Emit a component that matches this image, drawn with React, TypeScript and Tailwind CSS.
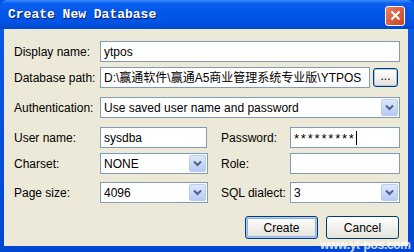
import React from "react";

const Chevron = () => (
  <svg width="9" height="7" viewBox="0 0 9 7">
    <path d="M1 1.5 L4.5 5 L8 1.5" fill="none" stroke="#4D6185" strokeWidth="2" />
  </svg>
);

function Input({ w, children }: { w: string; children?: React.ReactNode }) {
  return (
    <div className={`${w} h-[21px] border border-[#7F9DB9] bg-white flex items-center pl-[3px] overflow-hidden whitespace-nowrap text-[12px] text-black`}>
      {children}
    </div>
  );
}

function Select({ w, value }: { w: string; value: string }) {
  return (
    <div className={`${w} h-[21px] border border-[#7F9DB9] bg-white flex items-center pl-[3px] text-[12px] text-black`}>
      <span className="flex-1 whitespace-nowrap overflow-hidden">{value}</span>
      <div className="w-[17px] h-[17px] mr-[1px] rounded-[2px] border border-[#B9CBF3] bg-gradient-to-b from-[#DDE8FE] to-[#B7CAF5] flex items-center justify-center">
        <Chevron />
      </div>
    </div>
  );
}

const Label = ({ w, children }: { w: string; children: React.ReactNode }) => (
  <div className={`${w} text-[12px] text-black whitespace-nowrap`}>{children}</div>
);

export default function App() {
  return (
    <div className="w-[414px] h-[252px] relative font-['Liberation_Sans',sans-serif] overflow-hidden bg-[#0050DD]">
      <div className="flex flex-col h-full rounded-t-[7px] bg-gradient-to-b from-[#0A5BE8] to-[#0046D4]">
        {/* Title bar */}
        <div className="h-[29px] flex items-center justify-between pl-[8px] pr-[9px] rounded-t-[7px] bg-[linear-gradient(to_bottom,#3D8DFF_0%,#0A5EF0_12%,#0056E8_50%,#0052E2_80%,#0046CE_100%)]">
          <span className="font-['Liberation_Mono',monospace] font-bold text-[13px] text-white [text-shadow:1px_1px_0_#0A1E6E]">
            Create New Database
          </span>
          <div className="w-[20px] h-[20px] mt-[2px] rounded-[3px] border border-white bg-gradient-to-br from-[#E98063] to-[#C8401E] flex items-center justify-center">
            <svg width="11" height="11" viewBox="0 0 11 11">
              <path d="M1.5 1.5 L9.5 9.5 M9.5 1.5 L1.5 9.5" stroke="white" strokeWidth="2" />
            </svg>
          </div>
        </div>
        {/* Client area */}
        <div className="flex-1 ml-[4px] mr-[6px] mb-[6px] bg-[#ECE9D8] pl-[10px] pr-[8px] flex flex-col">
          <div className="flex items-center mt-[12px]">
            <Label w="w-[86px]">Display name:</Label>
            <Input w="w-[300px]">ytpos</Input>
          </div>
          <div className="flex items-center mt-[5px]">
            <Label w="w-[86px]">Database path:</Label>
            <Input w="w-[270px]">
              <span className="font-['Liberation_Sans','Noto_Sans_CJK_SC',sans-serif] text-[12px]">
                D:\赢通软件\赢通A5商业管理系统专业版\YTPOS
              </span>
            </Input>
            <div className="ml-[3px] w-[25px] h-[19px] rounded-[3px] border border-[#003C74] bg-gradient-to-b from-white to-[#E6E3D6] shadow-[inset_0_0_0_1px_#A9C4EE] flex items-end justify-center pb-[4px] text-[12px] leading-none">
              ...
            </div>
          </div>
          <div className="flex items-center mt-[9px]">
            <Label w="w-[86px]">Authentication:</Label>
            <Select w="w-[300px]" value="Use saved user name and password" />
          </div>
          <div className="flex items-center mt-[9px]">
            <Label w="w-[86px]">User name:</Label>
            <Input w="w-[107px]">sysdba</Input>
            <Label w="w-[83px] pl-[14px]">Password:</Label>
            <Input w="w-[110px]">
              <span className="text-[13px] tracking-[1.8px] mt-[3px]">*********</span>
              <span className="w-[1px] h-[14px] bg-black" />
            </Input>
          </div>
          <div className="flex items-center mt-[5px]">
            <Label w="w-[86px]">Charset:</Label>
            <Select w="w-[108px]" value="NONE" />
            <Label w="w-[82px] pl-[13px]">Role:</Label>
            <Input w="w-[110px]" />
          </div>
          <div className="flex items-center mt-[8px]">
            <Label w="w-[86px]">Page size:</Label>
            <Select w="w-[108px]" value="4096" />
            <Label w="w-[82px] pl-[13px]">SQL dialect:</Label>
            <Select w="w-[110px]" value="3" />
          </div>
          <div className="flex justify-end mt-[13px] pr-[1px] gap-[8px]">
            <div className="w-[73px] h-[23px] rounded-[3px] border border-[#003C74] bg-gradient-to-b from-white to-[#E3E2DA] shadow-[inset_0_0_0_1px_#B4CBF1,inset_0_0_0_2px_#8FB0EA] flex items-center justify-center text-[12px] text-black">
              Create
            </div>
            <div className="w-[73px] h-[23px] rounded-[3px] border border-[#003C74] bg-gradient-to-b from-white to-[#E3E2DA] flex items-center justify-center text-[12px] text-black">
              Cancel
            </div>
          </div>
        </div>
      </div>
      <div className="absolute left-[320px] top-[236px] whitespace-nowrap text-[12px] font-bold text-white/80 font-['Liberation_Sans',sans-serif] tracking-[-0.3px]">
        www.yt-pos.com
      </div>
    </div>
  );
}
